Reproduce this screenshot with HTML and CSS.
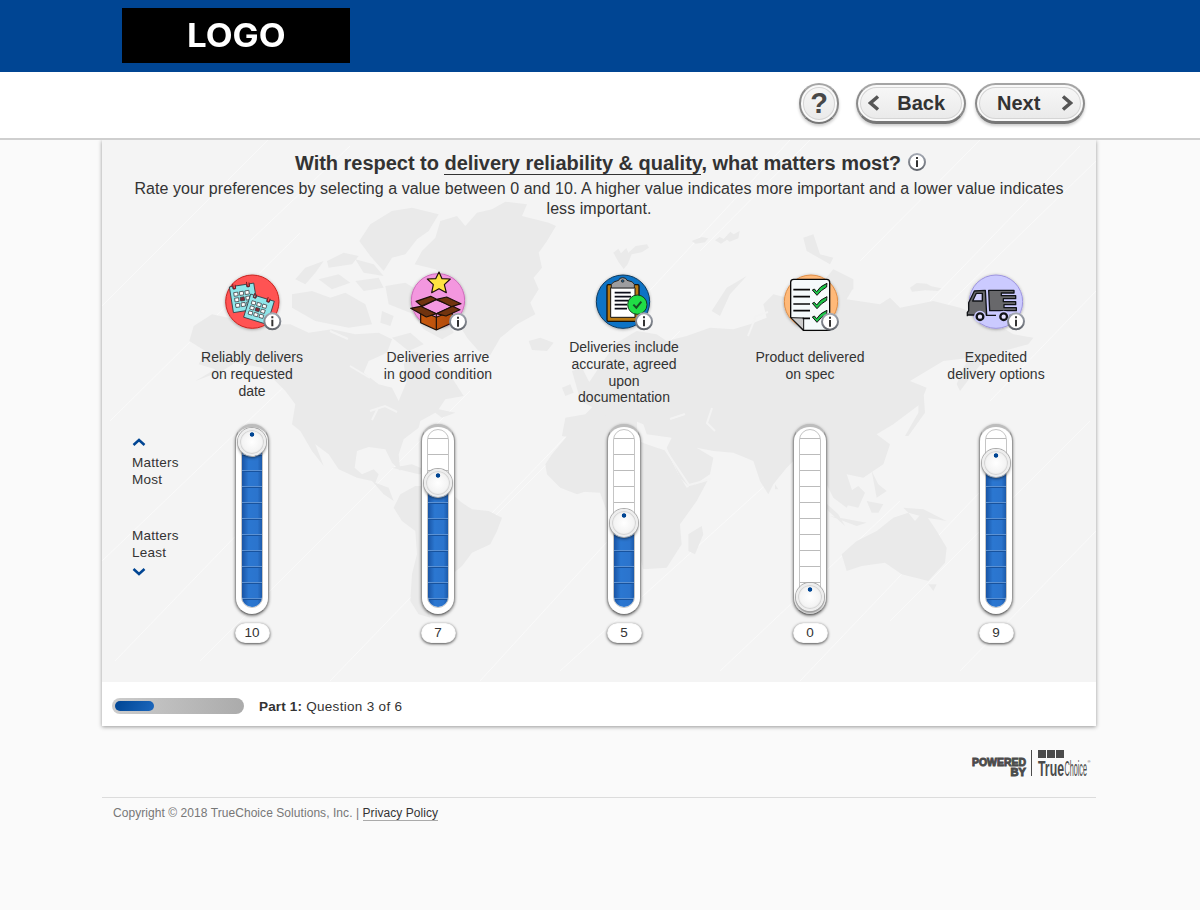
FILE: index.html
```
<!DOCTYPE html>
<html lang="en">
<head>
<meta charset="utf-8">
<title>Delivery preferences</title>
<link rel="stylesheet" href="styles.css">
</head>
<body>
<svg width="0" height="0" class="defs">
  <defs>
    <linearGradient id="ring" x1="0" y1="0" x2="0" y2="1"><stop offset="0" stop-color="#a4a9b3"/><stop offset="1" stop-color="#62666d"/></linearGradient>
    <linearGradient id="wood" x1="0" y1="0" x2="1" y2="0"><stop offset="0" stop-color="#c95a0e"/><stop offset="1" stop-color="#b04a0b"/></linearGradient>
    <filter id="soft" x="-30%" y="-30%" width="160%" height="160%"><feDropShadow dx="0" dy="2" stdDeviation="5" flood-opacity=".35"/></filter>
    <symbol id="info" viewBox="0 0 60 60">
      <circle cx="30" cy="30" r="24" fill="#fff" stroke="url(#ring)" stroke-width="6"/>
      <path d="M27 15h6v6h-6zM27 25h6v20h-6z" fill="#333"/>
    </symbol>
    <g id="cal">
      <path d="M0 7h10v8h8V7h34v8h8V7h14v78H0z" fill="#8fe6ea" stroke="#2c3d44" stroke-width="2.500"/>
      <path d="M11 0v12q4 6 7 0V3M53 0v12q4 6 7 0V3" fill="none" stroke="#7a1820" stroke-width="3"/>
      <g fill="#fff" stroke="#3b3b40" stroke-width="2.200">
        <path d="M10 26h12v11h-12zM27 26h12v11h-12zM44 26h12v11h-12zM10 43h12v11h-12zM44 43h12v11h-12zM10 60h12v11h-12zM27 60h12v11h-12zM44 60h12v11h-12z"/>
        <path d="M27 43h12v11h-12z" fill="#8c2530"/>
      </g>
    </g>
    <path id="tick" d="M0 15l6-3 7 8q10-17 31-25-1 5-1 11-17 9-29 25z" fill="#1cc549" stroke="#111" stroke-width="3"/>
  </defs>
</svg>

<header class="brand"><div class="logo"><span>LOGO</span></div></header>
<nav class="toolbar">
  <button class="btn help">?</button>
  <button class="btn back"><svg width="12" height="16" viewBox="0 0 12 16"><path d="M10 1.500L2.500 8l7.500 6.500"/></svg><span>Back</span></button>
  <button class="btn next"><span>Next</span><svg width="12" height="16" viewBox="0 0 12 16"><path d="M2 1.500L9.500 8 2 14.500"/></svg></button>
</nav>

<main class="card">
  <section class="panel">
    <svg class="map" viewBox="102 139 994 543" width="994" height="543">
      <g stroke="#fff" stroke-width="1" opacity=".5">
        <path d="M102 305L268 139M110 420L300 232M102 560L290 380M115 660L250 520M200 660L470 390M250 240L350 145M330 680L600 400M450 560L680 330M480 680L690 450M560 670L770 480M640 300L790 139M720 670L900 500M700 250L810 139M800 680L1000 470M860 260L980 139M890 620L1090 420M900 350L1096 160M930 300L1080 145M960 670L1096 530M990 400L1096 290"/>
      </g>
      <g fill="#eaeaea">
        <g transform="translate(102 190) scale(.33333)">
          <path d="M938 220L960 180 1000 140 1015 90 1065 75 1090 105 1125 65 1170 55 1210 32 1275 40 1260 75 1340 95 1362 105 1335 150 1310 185 1320 230 1295 260 1310 295 1285 335 1300 370 1245 400 1195 440 1165 492 1130 480 1095 440 1065 390 1045 350 1055 300 1030 260 1000 235z"/>
          <path d="M772 150L805 100 870 60 930 50 1010 70 980 120 945 145 910 190 870 200 845 240 805 195z"/>
          <path d="M580 265L610 230 665 210 640 245 610 280zM675 210l50-25 45 10-20 25-70 10zM570 310l60-10 55 20 45-15 60 35 20 60-70 10-100-20-70-40zM650 265l60-15 35 25-55 20zM760 270l70-10 15 30-60 10zM760 205l55 15 30 35-60-10zM850 285l60-10 50 30 65 55 30 65-35 20-55-30-30-45-75-30zM840 360l35 15-10 30-30-10zM870 440l55-15 40 35-45 20z"/>
          <path d="M262 450L275 405 330 370 400 385 480 400 565 400 620 425 690 415 760 430 830 425 870 445 855 485 800 510 785 545 830 580 870 590 890 630 915 570 905 520 930 480 985 495 1010 525 1050 560 1085 615 1030 625 1010 655 1060 665 1020 680 1000 665 955 690 950 710 905 745 890 790 895 840 870 815 850 775 800 768 765 780 758 830 780 850 815 835 830 850 820 875 860 890 875 930 845 910 810 870 765 860 710 835 680 790 640 760 665 825 630 780 595 720 570 700 580 640 550 600 520 570 480 530 400 515 360 540 280 570 340 535 290 520 310 480z"/>
          <path d="M870 830l60-10 60 25-40 5zM1280 450l35-10 40 15-20 25-45-3z"/>
          <path d="M895 910L940 885 1000 885 1050 910 1080 935 1110 955 1160 960 1200 980 1185 1020 1165 1060 1110 1085 1080 1125 1050 1150 1020 1190 995 1220 975 1250 985 1280 950 1270 925 1230 930 1150 945 1090 940 1020 900 990 875 950z"/>
          <path d="M1390 680l60-10 30-30 55-60 70 20v150l-50-35-70 15-45 15-60-10zM1410 540l30-10 20 40 30 30-60 10zM1380 590l25-10 10 25-25 10z"/>
          <path d="M1400 730L1450 715 1510 710V905L1470 895 1425 910 1375 890 1335 850 1330 820 1350 790z"/>
        </g>
        <g transform="translate(600 190) scale(.33333)">
          <path d="M-30 570L10 510 50 455 110 420 170 430 200 450 260 435 330 410 400 415 450 400 500 380 490 340 520 310 600 330 680 310 760 290 740 325 840 340 870 320 900 350 1000 330 1080 350 1160 380 1240 430 1300 440 1285 460 1210 480 1150 510 1110 560 1080 600 1070 580 1090 530 1110 500 1030 510 930 570 980 590 960 640 920 670 880 700 830 730 870 760 850 820 790 860 740 850 760 910 740 950 700 920 670 860 650 830 600 790 560 830 520 880 505 910 480 870 460 810 400 785 340 780 290 770 340 800 330 850 270 890 240 860 200 770 215 740 140 730 130 700 80 680 50 700 0 660-60 630z"/>
          <path d="M-90 720L0 720 60 725 140 760 200 780 235 850 260 890 325 865 290 930 240 1000 245 1060 200 1130 130 1135 110 1060 90 1000 20 960 0 905-90 900z"/>
          <path d="M265 1030l40-25 5 25-25 60-20-10zM770 1050l60-30 50-40 45-15 20 25 25-30 40 60 30 50-5 45-50 55-80-20-50-35-70 10-45 15-15-50zM985 1180l25 0-10 20zM660 920l55 50 20 35-50-45zM720 920l55-35 20 20-20 45-45-10zM800 930l50 10-15 25-20 0zM690 975l110 20-30 10zM910 950l60 5 70 35-60-10-55-15zM955 590l15 5 5 70-50 70-10 0 40-70zM815 840l20 40 25 20-30 20zM335 360l45-70 60-35-50 55-30 65zM40 185l15-12 8 14 16-16 6 14 22-20 34-5 6 10-22 14-30 6-12 30-12 14-16-22zM275 150l30-12 20 4-10 12-28 4zM345 148l14-10 12 6 20-22 10 8 18-10-4 22-26 10-8-6-18 12zM610 140l30-10 20 60 40 10-10 20-70-40zM670 270l30-35 60 30 0 30-70 20zM930 290l20-14 30 2 14 8 30 6-10 8-38-2-40 4zM525 880l10 15-10 0z"/>
        </g>
      </g>
      <g fill="none" stroke="#f3f3f3" stroke-width="2"><path d="M370 410l15-5 12 6M378 407l-6 12M670 418l15-5M712 407l-5 15 8 8M665 448l24 36 22-6M748 335l8-20 12-4M350 365l20 12M330 330l18 8"/></g>
    </svg>
    <div class="content">
      <h1><span>With respect to <u>delivery reliability &amp; quality</u>, what matters most?</span><svg width="20" height="20"><use href="#info"/></svg></h1>
      <p class="desc"><span>Rate your preferences by selecting a value between 0 and 10. A higher value indicates more important and a lower value indicates</span><br>less important.</p>
      <div class="ratings">
        <aside class="scale">
          <svg width="14" height="10" viewBox="0 0 14 10"><path d="M1.500 8L7 3l5.500 5"/></svg>
          <p class="most">Matters<br>Most</p>
          <p class="least">Matters<br>Least</p>
          <svg width="14" height="10" viewBox="0 0 14 10"><path d="M1.500 2L7 7l5.500-5"/></svg>
        </aside>

        <article class="item">
          <svg class="icon" viewBox="-9 0 270 240">
            <circle cx="127" cy="125" r="80" fill="#ff5353" stroke="#c8231f" stroke-width="3" filter="url(#soft)"/>
            <use href="#cal" transform="translate(57 74) rotate(-9)"/>
            <use href="#cal" transform="translate(124 96) rotate(17) scale(1 .93)"/>
            <use href="#info" x="157" y="154" width="60" height="60"/>
          </svg>
          <p class="label">Reliably delivers<br>on requested<br>date</p>
          <div class="slider"><div class="track"><div class="fill" style="height:166px"></div></div><i class="knob" style="top:2px"></i></div>
          <output>10</output>
        </article>

        <article class="item">
          <svg class="icon" viewBox="-6 0 270 240">
            <circle cx="129" cy="121" r="80" fill="#f397df" stroke="#cf6bbb" stroke-width="3" filter="url(#soft)"/>
            <g stroke="#1c100a" stroke-width="3.500" stroke-linejoin="round">
              <path d="M77 152l47 20 48-20v36l-48 22-47-22z" fill="url(#wood)"/>
              <path d="M78 141l45-22 50 20-49 22z" fill="#f397df"/>
              <path d="M63 124l44-15 18 9-45 20zM125 118l30-7 43 20-28 9zM47 145l30-6 47 22-30 10zM124 161l49-22 22 10-42 19z" fill="#71340f"/>
              <path d="M124 163v47" fill="none"/>
              <path d="M132 36l9 20 25 1-18 17 6 24-22-12-22 12 5-24-18-17 25-1z" fill="#ffe342"/>
            </g>
            <use href="#info" x="159" y="155" width="60" height="60"/>
          </svg>
          <p class="label wide">Deliveries arrive<br>in good condition</p>
          <div class="slider"><div class="track"><div class="fill" style="height:126px"></div></div><i class="knob" style="top:43px"></i></div>
          <output>7</output>
        </article>

        <article class="item">
          <svg class="icon" viewBox="-3 0 270 240">
            <circle cx="129" cy="125" r="80" fill="#1173c5" stroke="#103a5e" stroke-width="3" filter="url(#soft)"/>
            <rect x="81" y="74" width="96" height="110" rx="4" fill="#b97a13" stroke="#17130c" stroke-width="4"/>
            <path d="M92 83h73v89H92z" fill="#fff" stroke="#111" stroke-width="3"/>
            <path d="M94 84V73q3-8 22-12 1-8 12-8t13 8q20 3 22 12v11z" fill="#9d9d9f" stroke="#222" stroke-width="3"/>
            <circle cx="128" cy="63" r="4" fill="#245b83" stroke="#222" stroke-width="2"/>
            <path d="M104 98h48M104 110h49M104 122h43M104 134h37M104 146h37" stroke="#0b0d18" stroke-width="5"/>
            <circle cx="172" cy="134" r="29" fill="#20dd46" stroke="#173d20" stroke-width="3"/>
            <path d="M160 134l9 9 15-18" fill="none" stroke="#164f25" stroke-width="6"/>
            <use href="#info" x="162" y="154" width="60" height="60"/>
          </svg>
          <p class="label four">Deliveries include<br>accurate, agreed<br>upon<br>documentation</p>
          <div class="slider"><div class="track"><div class="fill" style="height:86px"></div></div><i class="knob" style="top:83px"></i></div>
          <output>5</output>
        </article>

        <article class="item">
          <svg class="icon" viewBox="-9 0 270 240">
            <circle cx="129" cy="125" r="80" fill="#ffb979" stroke="#df8e48" stroke-width="3" filter="url(#soft)"/>
            <path d="M77 58h99q9 0 9 9v144h-79l-38-39V67q0-9 9-9z" fill="#f5fafb" stroke="#080808" stroke-width="4"/>
            <path d="M69 173l38 1v36z" fill="#ccc" stroke="#111" stroke-width="3"/>
            <path d="M76 89h50M76 110h50M76 132h50M76 152h50M104 175h22" stroke="#0a0a0a" stroke-width="5"/>
            <use href="#tick" x="133" y="75"/><use href="#tick" x="133" y="115"/><use href="#tick" x="133" y="156"/>
            <use href="#info" x="156" y="155" width="60" height="60"/>
          </svg>
          <p class="label">Product delivered<br>on spec</p>
          <div class="slider"><div class="track"></div><i class="knob" style="top:157px"></i></div>
          <output>0</output>
        </article>

        <article class="item">
          <svg class="icon" viewBox="3 0 270 240">
            <circle cx="138" cy="125" r="80" fill="#cbcaff" stroke="#9d94df" stroke-width="3" filter="url(#soft)"/>
            <g stroke="#111317" stroke-width="4" stroke-linejoin="round">
              <path d="M52 167v-10l4-5v-24l17-35 33-2 4 74H52z" fill="#68686b"/>
              <path d="M68 123l11-23h18v23z" fill="#d3d0ff"/>
              <path d="M116 91h76v8h-38v8h43v9h-37v9h37v9h-35v9h37v9H119z" fill="#68686b"/>
              <path d="M108 166h30M178 166h20" fill="none"/>
              <circle cx="90" cy="170" r="16" fill="#d3d0ff" stroke="#cbcaff"/><circle cx="90" cy="170" r="10" fill="#e4e1ff" stroke-width="7"/>
              <circle cx="161" cy="170" r="16" fill="#d3d0ff" stroke="#cbcaff"/><circle cx="161" cy="170" r="10" fill="#e4e1ff" stroke-width="7"/>
            </g>
            <use href="#info" x="168" y="154" width="60" height="60"/>
          </svg>
          <p class="label">Expedited<br>delivery options</p>
          <div class="slider"><div class="track"><div class="fill" style="height:145px"></div></div><i class="knob" style="top:23px"></i></div>
          <output>9</output>
        </article>
      </div>
    </div>
  </section>
  <section class="status"><div class="progress"><div class="bar"></div></div><p><b>Part 1:</b> Question 3 of 6</p></section>
</main>

<footer class="foot">
  <div class="powered">
    <svg width="126" height="40" viewBox="970 748 126 40" fill="#4b4b4b">
      <g font-family="Liberation Sans, sans-serif" font-weight="700" font-size="10" stroke="#4b4b4b" stroke-width=".9"><text x="972" y="766" textLength="54" lengthAdjust="spacingAndGlyphs">POWERED</text><text x="1010.500" y="776" textLength="15.500" lengthAdjust="spacingAndGlyphs">BY</text></g>
      <path d="M1031 750h1v26h-1zM1038 750h8v8h-8zM1047 750h8v8h-8zM1056 750h8v8h-8z"/>
      <g font-family="Liberation Sans, sans-serif"><text x="1038" y="776" font-size="22.500" font-weight="700" textLength="26" lengthAdjust="spacingAndGlyphs">True</text><text x="1064.500" y="776" font-size="22.500" textLength="22.500" lengthAdjust="spacingAndGlyphs">Choice</text><text x="1087.500" y="763" font-size="4">®</text></g>
    </svg>
  </div>
  <div class="legal"><span>Copyright © 2018 TrueChoice Solutions, Inc. | </span><a href="#">Privacy Policy</a></div>
</footer>
</body>
</html>
```
FILE: styles.css
```
* { box-sizing: border-box; }
body { margin: 0; background: #fafafa; color: #333; font-family: "Liberation Sans", Arial, sans-serif; height: 910px; overflow: hidden; }
p, h1 { margin: 0; }
.defs { position: absolute; }
.brand { height: 72px; background: #004593; padding: 8px 122px; }
.logo { width: 228px; height: 55px; background: #000; color: #fff; font: 700 32px/55px Inter, sans-serif; text-align: center; }
.logo span { display: inline-block; transform: scaleX(1.09); }
.toolbar { height: 68px; background: #fff; border-bottom: 2px solid #cfcfcf; display: flex; justify-content: flex-end; padding: 11px 115px 0 0; }
.btn { height: 41px; width: 110px; border: 2px solid #8b8b8b; border-top-color: #a5a5a5; border-bottom: 3px solid #777; border-radius: 21px; background: linear-gradient(#f8f8f8, #e9e9e9); box-shadow: inset 0 0 0 2px #f9f9f9, inset 0 0 0 3px #d5d5d5, 0 2px 3px rgba(0,0,0,.2); font: 700 20px "Liberation Sans", Arial, sans-serif; color: #333; padding: 0 10px; display: flex; align-items: center; justify-content: space-between; }
.btn svg { fill: none; stroke: #555; stroke-width: 3.500; }
.back { margin-right: 9px; padding-right: 19px; }
.next { padding-left: 20px; }
.help { width: 40px; margin-right: 17px; padding: 0; font-size: 29px; justify-content: center; color: #484848; border-width: 2px; }
.card { width: 994px; height: 586px; margin-left: 102px; background: #fff; box-shadow: 0 1px 4px rgba(0,0,0,.4); clip-path: inset(0 -6px -8px -6px); }
.panel { height: 542px; background: #f4f4f4; display: grid; }
.panel > * { grid-area: 1 / 1; }
.content { padding-top: 11px; z-index: 1; }
h1 { display: flex; justify-content: center; align-items: center; gap: 6px; height: 24px; font-size: 20px; line-height: 24px; padding-left: 24px; }
h1 > span { letter-spacing: -.02px; white-space: nowrap; }
h1 svg { margin-top: -2px; }
h1 u { text-decoration: none; border-bottom: 1px solid #333; }
.desc { margin-top: 4px; font-size: 16px; line-height: 20px; letter-spacing: .06px; text-align: center; white-space: nowrap; }
.ratings { display: flex; gap: 60px; padding-left: 30px; margin-top: 41px; }
.scale { width: 57px; margin-right: -60px; padding-top: 177px; font-size: 13.500px; letter-spacing: .25px; line-height: 17px; }
.scale svg { display: block; fill: none; stroke: #004593; stroke-width: 2.500; }
.most { margin-top: 7px; }
.least { margin: 39px 0 6px; }
.item { width: 126px; display: flex; flex-direction: column; align-items: center; }
.icon { width: 90px; height: 80px; display: block; }
.label { margin-top: 9px; height: 75px; font-size: 14px; line-height: 17px; text-align: center; white-space: nowrap; }
.label.wide { letter-spacing: .16px; }
.label.four { margin-top: -1px; height: 85px; line-height: 16.800px; }
.slider { position: relative; width: 34px; height: 191px; border-radius: 17px; padding: 4px 6px 6px 5px; border: 1px solid #999; border-top: 3px solid #bdbdbd; border-bottom-color: #777; background: #fff; box-shadow: 0 1px 3px rgba(0,0,0,.5); }
.track { height: 179px; margin-top: -2px; width: 22px; border: 1px solid #c5c5c5; border-radius: 11px; overflow: hidden; display: flex; flex-direction: column; justify-content: flex-end; background: repeating-linear-gradient(transparent 0 15px, #bbb 15px 16px) 0 -7px / 100% 200px, #fff; }
.fill { flex: none; margin: 0 -1px -1px; background: repeating-linear-gradient(0deg, transparent 0 8px, #17529d 8px 9px, #5c91d2 9px 10px, transparent 10px 16px), linear-gradient(90deg, #164f9e, #2b77d1 35%, #2b74cd 75%, #1955a3); border-radius: 0 0 11px 11px; }
.knob { position: absolute; left: 2px; width: 28px; height: 28px; margin-top: -1px; border-radius: 50%; border: 2px solid #eee; background: radial-gradient(circle at 12px 4.500px, #004593 0 1.800px, transparent 2.600px), radial-gradient(#fff, #f3f3f3 60%, #ddd); box-shadow: 0 0 0 1px #aaa, 0 2px 3px rgba(0,0,0,.5), inset 0 0 1px 1px #d2d2d2; }
output { width: 35px; height: 20px; margin-top: 8px; border-radius: 10px; background: #fff; box-shadow: 0 1px 3px rgba(0,0,0,.7), inset 0 0 1px #aaa; text-align: center; font-size: 13.500px; line-height: 20px; }
.status { height: 44px; display: flex; align-items: center; padding: 3px 0 0 10px; gap: 15px; font-size: 13.500px; letter-spacing: .31px; }
.status p { white-space: nowrap; padding-top: 1px; }
.status b { letter-spacing: .15px; }
.progress { width: 132px; height: 16px; border-radius: 8px; padding: 3px; background: linear-gradient(90deg, #ccc, #ababab); }
.bar { width: 39px; height: 10px; border-radius: 5px; background: linear-gradient(120deg, #004593, #1c67bd); }
.foot { width: 994px; margin-left: 102px; }
.powered { height: 72px; border-bottom: 1px solid #dcdcdc; padding: 22px 0 0 868px; }
.powered svg { display: block; }
.legal { padding: 7px 11px; font-size: 12px; line-height: 16px; letter-spacing: .06px; color: #777; }
.legal a { color: #333; text-decoration: none; border-bottom: 1px solid #aaa; }
```
